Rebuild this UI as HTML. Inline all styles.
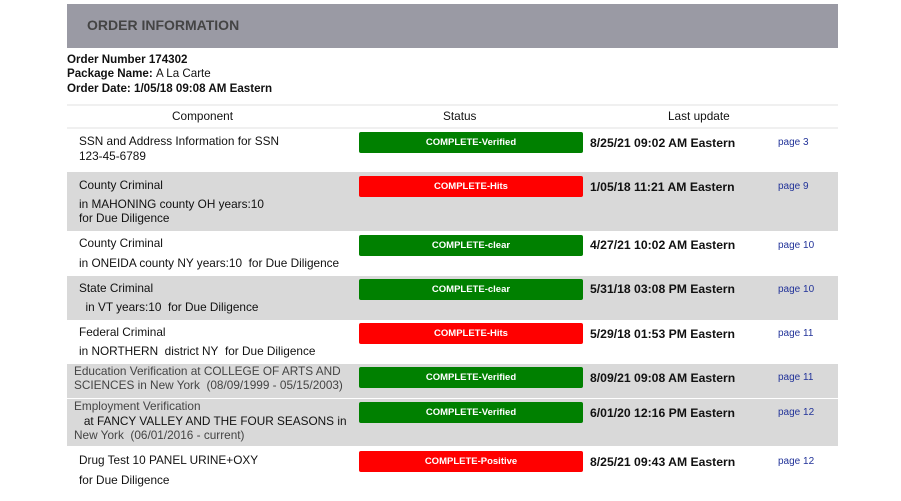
<!DOCTYPE html>
<html><head><style>
body{margin:0;width:901px;height:501px;background:#fff;position:relative;font-family:"Liberation Sans",Arial,sans-serif;overflow:hidden}
div{position:absolute}
.t{white-space:nowrap;font-size:11.8px;color:#111;line-height:14px}
.b{font-weight:bold}
.row{left:67px;width:771px;background:#d9d9d9}
.btn{left:359px;width:224px;height:21px;border-radius:2px;color:#fff;font-weight:bold;font-size:9.5px;text-align:center;line-height:21px}
.g{background:#008000}.r{background:#ff0000}
.d{left:590px;font-weight:bold;font-size:12.2px;color:#111;white-space:nowrap;line-height:14px}
.p{left:778px;font-size:10px;color:#223399;white-space:nowrap;line-height:12px}
.c{left:79px}
.e{left:74px;color:#444}
</style></head><body>
<div style="left:67px;top:4px;width:771px;height:44px;background:#9a9aa4"></div>
<div class="t b" style="left:87px;top:18px;font-size:14px;color:#444">ORDER INFORMATION</div>
<div class="t b" style="left:67px;top:53px;font-size:11.6px">Order Number 174302</div>
<div class="t b" style="left:67px;top:67px;font-size:11.6px">Package Name: <span style="font-weight:normal">A La Carte</span></div>
<div class="t b" style="left:67px;top:82px;font-size:11.6px">Order Date: 1/05/18 09:08 AM Eastern</div>
<div style="left:67px;top:104px;width:771px;height:2px;background:#f0f0f0"></div>
<div class="t" style="left:172px;top:109px">Component</div>
<div class="t" style="left:443px;top:109px">Status</div>
<div class="t" style="left:668px;top:109px">Last update</div>
<div style="left:67px;top:127px;width:771px;height:2px;background:#f0f0f0"></div>

<div class="row" style="top:172px;height:59px"></div>
<div class="row" style="top:276px;height:44px"></div>
<div class="row" style="top:364px;height:34px"></div>
<div class="row" style="top:399px;height:47px"></div>

<div class="t c" style="top:134px">SSN and Address Information for SSN</div>
<div class="t c" style="top:149px">123-45-6789</div>
<div class="btn g" style="top:132px">COMPLETE-Verified</div>
<div class="d" style="top:136px">8/25/21 09:02 AM Eastern</div>
<div class="p" style="top:137px">page 3</div>

<div class="t c" style="top:178px">County Criminal</div>
<div class="t c" style="top:197px">in MAHONING county OH years:10</div>
<div class="t c" style="top:211px">for Due Diligence</div>
<div class="btn r" style="top:176px">COMPLETE-Hits</div>
<div class="d" style="top:180px">1/05/18 11:21 AM Eastern</div>
<div class="p" style="top:181px">page 9</div>

<div class="t c" style="top:236px">County Criminal</div>
<div class="t c" style="top:256px">in ONEIDA county NY years:10&nbsp; for Due Diligence</div>
<div class="btn g" style="top:235px">COMPLETE-clear</div>
<div class="d" style="top:238px">4/27/21 10:02 AM Eastern</div>
<div class="p" style="top:240px">page 10</div>

<div class="t c" style="top:281px">State Criminal</div>
<div class="t c" style="top:300px">&nbsp; in VT years:10&nbsp; for Due Diligence</div>
<div class="btn g" style="top:279px">COMPLETE-clear</div>
<div class="d" style="top:282px">5/31/18 03:08 PM Eastern</div>
<div class="p" style="top:284px">page 10</div>

<div class="t c" style="top:325px">Federal Criminal</div>
<div class="t c" style="top:344px">in NORTHERN&nbsp; district NY&nbsp; for Due Diligence</div>
<div class="btn r" style="top:323px">COMPLETE-Hits</div>
<div class="d" style="top:327px">5/29/18 01:53 PM Eastern</div>
<div class="p" style="top:328px">page 11</div>

<div class="t e" style="top:364px">Education Verification at COLLEGE OF ARTS AND</div>
<div class="t e" style="top:378px">SCIENCES in New York&nbsp; (08/09/1999 - 05/15/2003)</div>
<div class="btn g" style="top:367px">COMPLETE-Verified</div>
<div class="d" style="top:371px">8/09/21 09:08 AM Eastern</div>
<div class="p" style="top:372px">page 11</div>

<div class="t e" style="top:399px">Employment Verification</div>
<div class="t e" style="top:414px;color:#111">&nbsp;&nbsp; at FANCY VALLEY AND THE FOUR SEASONS in</div>
<div class="t e" style="top:428px">New York&nbsp; (06/01/2016 - current)</div>
<div class="btn g" style="top:402px">COMPLETE-Verified</div>
<div class="d" style="top:406px">6/01/20 12:16 PM Eastern</div>
<div class="p" style="top:407px">page 12</div>

<div class="t c" style="top:453px">Drug Test 10 PANEL URINE+OXY</div>
<div class="t c" style="top:473px">for Due Diligence</div>
<div class="btn r" style="top:451px">COMPLETE-Positive</div>
<div class="d" style="top:455px">8/25/21 09:43 AM Eastern</div>
<div class="p" style="top:456px">page 12</div>
</body></html>
